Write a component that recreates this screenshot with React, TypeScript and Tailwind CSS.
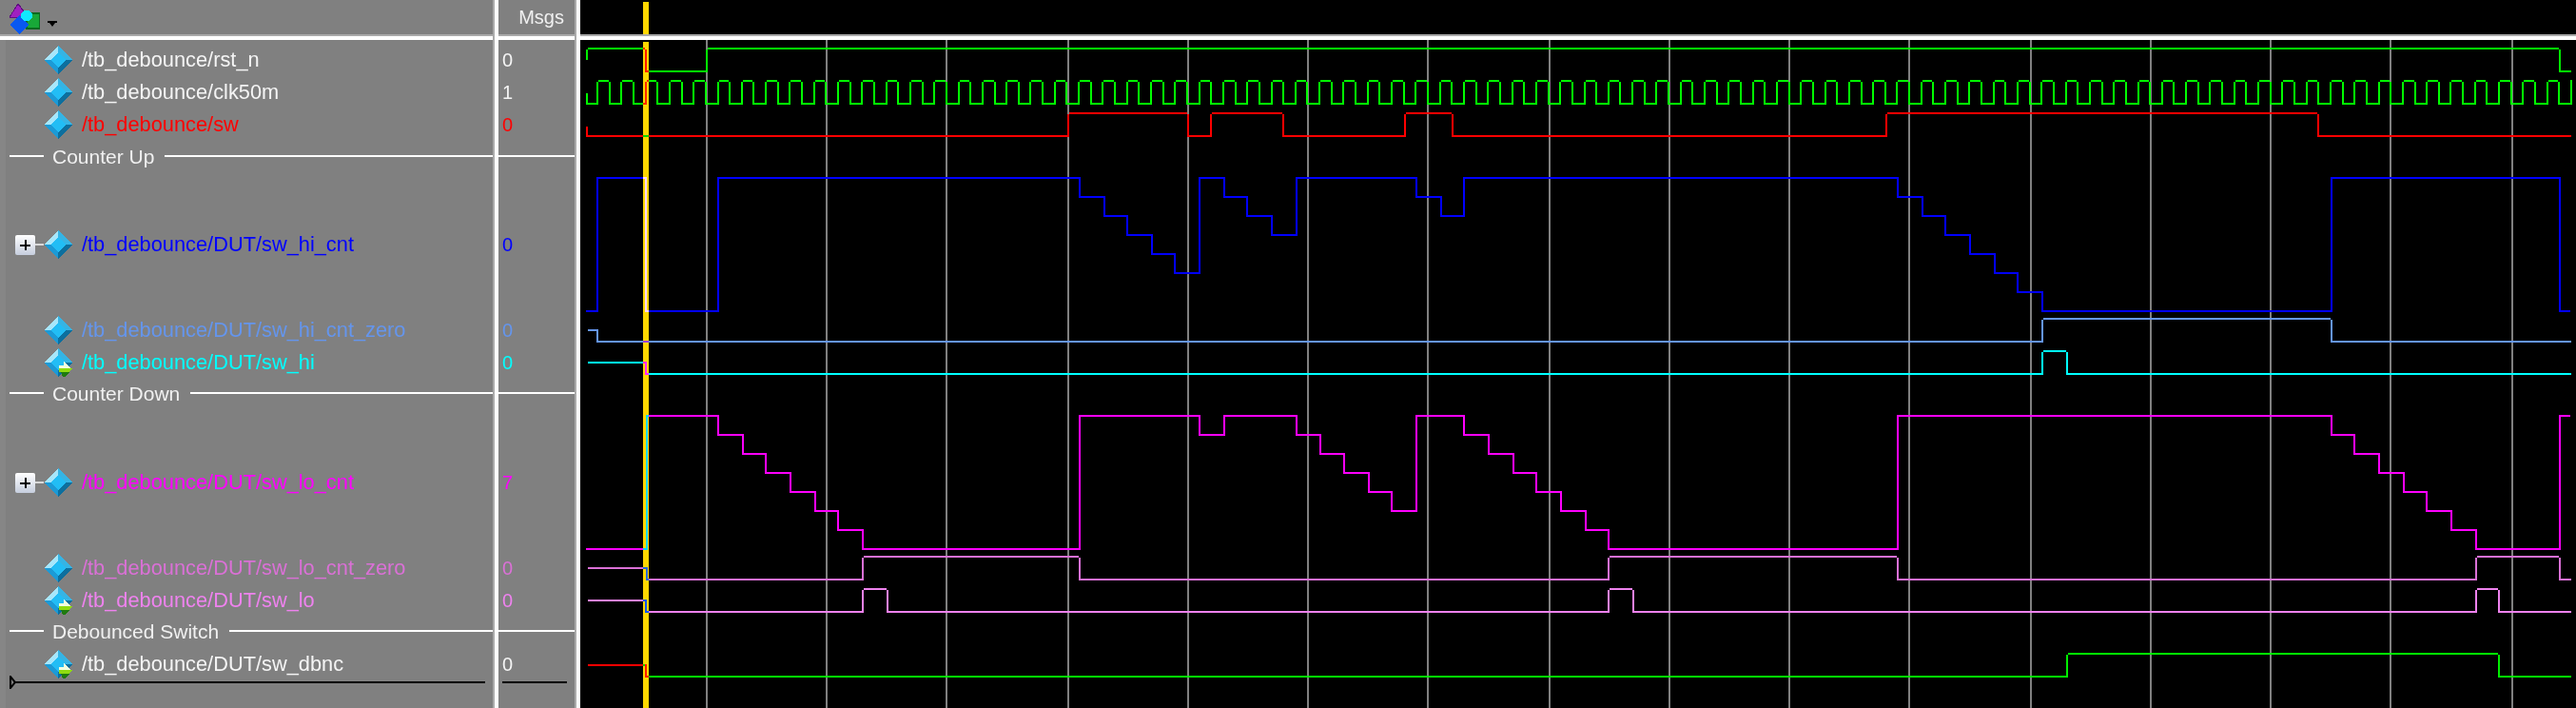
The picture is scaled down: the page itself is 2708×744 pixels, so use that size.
import React from "react";

type Row =
  | { kind: "signal"; name: string; value: string; color: string; h: string; expand?: boolean; output?: boolean }
  | { kind: "divider"; label: string; h: string };

const rows: Row[] = [
  { kind: "signal", name: "/tb_debounce/rst_n", value: "0", color: "text-[#f4f4f4]", h: "h-[34px]" },
  { kind: "signal", name: "/tb_debounce/clk50m", value: "1", color: "text-[#f4f4f4]", h: "h-[34px]" },
  { kind: "signal", name: "/tb_debounce/sw", value: "0", color: "text-[#ff0000]", h: "h-[34px]" },
  { kind: "divider", label: "Counter Up", h: "h-[32px]" },
  { kind: "signal", name: "/tb_debounce/DUT/sw_hi_cnt", value: "0", color: "text-[#0000ff]", h: "h-[150px] pt-[4px]", expand: true },
  { kind: "signal", name: "/tb_debounce/DUT/sw_hi_cnt_zero", value: "0", color: "text-[#6495ed]", h: "h-[34px]" },
  { kind: "signal", name: "/tb_debounce/DUT/sw_hi", value: "0", color: "text-[#00ffff]", h: "h-[33px]", output: true },
  { kind: "divider", label: "Counter Down", h: "h-[32px]" },
  { kind: "signal", name: "/tb_debounce/DUT/sw_lo_cnt", value: "7", color: "text-[#ff00ff]", h: "h-[152px] pt-[4px]", expand: true },
  { kind: "signal", name: "/tb_debounce/DUT/sw_lo_cnt_zero", value: "0", color: "text-[#da70d6]", h: "h-[32px]" },
  { kind: "signal", name: "/tb_debounce/DUT/sw_lo", value: "0", color: "text-[#ee82ee]", h: "h-[36px]", output: true },
  { kind: "divider", label: "Debounced Switch", h: "h-[28px]" },
  { kind: "signal", name: "/tb_debounce/DUT/sw_dbnc", value: "0", color: "text-[#f4f4f4]", h: "h-[39px] pt-[2px]", output: true },
];

const gridLines = [743, 869, 995, 1123, 1249, 1375, 1501, 1629, 1755, 1881, 2007, 2135, 2261, 2387, 2513, 2641];

// one bit signal: the high level loses its corners, same as the simulator draws it
function bitPath(hi: number, lo: number, edges: number[], startHigh: boolean) {
  let d = "";
  let high = startHigh;
  for (let i = 0; i < edges.length - 1; i++) {
    const a = edges[i];
    const b = edges[i + 1];
    d += high ? `M${a + 1} ${hi}H${b - 1}` : `M${a - 1} ${lo}H${b + 1}`;
    if (i < edges.length - 2) d += `M${b} ${hi + 1}V${lo + 1}`;
    high = !high;
  }
  return d;
}

// bus drawn as analog steps: [x, new y] pairs
function stepPath(x0: number, y0: number, steps: number[][], end: number) {
  let d = `M${x0} ${y0}`;
  for (const [x, y] of steps) d += `H${x}V${y}`;
  return d + `H${end}`;
}

function clockEdges() {
  const edges = [617];
  for (let k = 0; k <= 82; k++) {
    edges.push(Math.round(628 + 25.305 * k));
    if (k < 82) edges.push(Math.round(628 + 25.305 * k + 12.65));
  }
  edges.push(2703);
  return edges;
}

const hiCnt = stepPath(
  616,
  327,
  [
    [628, 187], [679, 327], [755, 187], [1135, 207], [1161, 227], [1185, 247], [1211, 267], [1235, 287],
    [1261, 187], [1287, 207], [1311, 227], [1337, 247], [1363, 187], [1489, 207], [1515, 227], [1539, 187],
    [1995, 207], [2021, 227], [2045, 247], [2071, 267], [2097, 287], [2121, 307], [2147, 327], [2451, 187],
    [2691, 327],
  ],
  2702,
);

const loCnt = stepPath(
  616,
  577,
  [
    [680, 437], [755, 457], [781, 477], [805, 497], [831, 517], [857, 537], [881, 557], [907, 577],
    [1135, 437], [1261, 457], [1287, 437], [1363, 457], [1388, 477], [1413, 497], [1439, 517], [1463, 537],
    [1489, 437], [1539, 457], [1565, 477], [1591, 497], [1615, 517], [1641, 537], [1667, 557], [1691, 577],
    [1995, 437], [2451, 457], [2475, 477], [2501, 497], [2527, 517], [2551, 537], [2577, 557], [2603, 577],
    [2691, 437],
  ],
  2702,
);

const traces = [
  { color: "#00ee00", d: "M617 52V63" + bitPath(51, 75, [617, 679, 743, 2691, 2702], true) },
  { color: "#00ff00", d: "M617 98V110" + bitPath(85, 109, clockEdges(), false) },
  { color: "#ff0000", d: "M617 133V144" + bitPath(119, 143, [617, 1123, 1249, 1273, 1349, 1477, 1527, 1983, 2437, 2702], false) },
  { color: "#0000ff", d: hiCnt },
  { color: "#6495ed", d: "M618 347H628V360" + bitPath(335, 359, [628, 2147, 2451, 2702], false) },
  { color: "#00ffff", d: "M618 381H679V394" + bitPath(369, 393, [679, 2147, 2173, 2702], false) },
  { color: "#ff00ff", d: loCnt },
  { color: "#da70d6", d: "M618 597H680V610" + bitPath(585, 609, [680, 907, 1135, 1691, 1995, 2603, 2691, 2702], false) },
  { color: "#ee82ee", d: "M618 631H679V644" + bitPath(619, 643, [679, 907, 933, 1691, 1717, 2603, 2627, 2702], false) },
  { color: "#ff0000", d: "M618 699H678" },
  { color: "#00ee00", d: "M679 698V712" + bitPath(687, 711, [679, 2173, 2627, 2702], false) },
];

function HeaderRule() {
  return <div className="h-[6px] shrink-0 border-t-2 border-[#aaaaaa] bg-white" />;
}

function Sash() {
  return <div className="w-[6px] shrink-0 border-l-2 border-[#aaaaaa] bg-white" />;
}

function SignalIcon({ output }: { output?: boolean }) {
  return (
    <svg width="30" height="30" viewBox="0 0 30 30" shapeRendering="crispEdges" className="shrink-0 overflow-visible">
      <polygon points="15,0 0,15 7,15 15,7" fill="#a6e6fb" />
      <polygon points="15,0 30,15 23,15 15,7" fill="#36b4e4" />
      <polygon points="0,15 15,30 15,23 7,15" fill="#1c9ad6" />
      <polygon points="30,15 15,30 15,23 23,15" fill="#0d6f9e" />
      <polygon points="15,7 23,15 15,23 7,15" fill="#22bdf5" />
      {output && (
        <g>
          <polygon points="18,25 27,25 23,30 20,30" fill="#1f7a10" />
          <polygon points="16,21 30,21 27,25 16,25" fill="#8fdc10" />
          <polygon points="21,14 29,21 16,21 16,18 21,18" fill="#f2ffe0" />
        </g>
      )}
    </svg>
  );
}

function ExpandBox() {
  return (
    <div className="flex w-[40px] shrink-0 items-center pl-[10px]">
      <div className="flex h-[21px] w-[21px] shrink-0 items-center justify-center rounded-[2px] bg-gradient-to-b from-white to-[#c6cede]">
        <svg width="11" height="11" viewBox="0 0 11 11" shapeRendering="crispEdges">
          <path d="M0 5.5H11M5.5 0V11" stroke="#000" strokeWidth="2" />
        </svg>
      </div>
      <div className="h-[2px] w-[9px] bg-[#d8d8d8]" />
    </div>
  );
}

function NamesColumn() {
  return (
    <div className="flex w-[518px] shrink-0 flex-col">
      <div className="flex h-[36px] items-start pl-[10px] pt-[4px]">
        <svg width="32" height="32" viewBox="0 0 32 32" shapeRendering="crispEdges" className="shrink-0">
          <polygon points="0,14 9,0 18,12 18,14" fill="#a020c0" stroke="#601080" />
          <rect x="18" y="10" width="14" height="16" fill="#18a838" stroke="#0c6a20" strokeWidth="2" />
          <polygon points="10,12 20,22 10,32 0,22" fill="#0858f0" />
          <circle cx="18" cy="12.5" r="6" fill="#10e8ff" />
        </svg>
        <svg width="10" height="6" viewBox="0 0 10 6" className="ml-[8px] mt-[18px] shrink-0">
          <polygon points="0,0 10,0 10,2 8,2 5,6 2,2 0,2" fill="#000" />
        </svg>
      </div>
      <HeaderRule />
      <div className="flex flex-1 flex-col border-l-[6px] border-[#868686] pt-[4px]">
        {rows.map((row) =>
          row.kind === "divider" ? (
            <div key={row.label} className={`flex items-center ${row.h}`}>
              <div className="ml-[4px] h-[2px] w-[36px] bg-white" />
              <span className="ml-[9px] mr-[11px] text-[21px] leading-none text-[#f0f0f0]">{row.label}</span>
              <div className="h-[2px] flex-1 bg-white" />
            </div>
          ) : (
            <div key={row.name} className={`flex items-center ${row.h}`}>
              {row.expand ? <ExpandBox /> : <div className="w-[40px] shrink-0" />}
              <SignalIcon output={row.output} />
              <span className={`ml-[10px] whitespace-nowrap text-[21.8px] leading-none ${row.color}`}>{row.name}</span>
            </div>
          ),
        )}
        <div className="relative ml-[10px] mr-[8px] h-[2px] bg-black">
          <svg width="7" height="14" viewBox="0 0 7 14" className="absolute left-[-6px] top-[-6px]">
            <path d="M1 1V13L6 7Z" fill="none" stroke="#000" strokeWidth="2" />
          </svg>
        </div>
      </div>
    </div>
  );
}

function MsgsColumn() {
  return (
    <div className="flex w-[80px] shrink-0 flex-col">
      <div className="flex h-[36px] items-center justify-end pr-[11px] text-[20px] leading-none text-[#f0f0f0]">Msgs</div>
      <HeaderRule />
      <div className="flex flex-1 flex-col pt-[4px]">
        {rows.map((row) =>
          row.kind === "divider" ? (
            <div key={row.label} className={`flex items-center ${row.h}`}>
              <div className="h-[2px] w-full bg-white" />
            </div>
          ) : (
            <div key={row.name} className={`flex items-center pl-[4px] text-[20px] leading-none ${row.h} ${row.color}`}>
              {row.value}
            </div>
          ),
        )}
        <div className="ml-[4px] mr-[8px] h-[2px] bg-black" />
      </div>
    </div>
  );
}

function WavePanel() {
  return (
    <div className="relative flex min-w-0 flex-1 flex-col bg-black">
      <div className="h-[36px] shrink-0" />
      <HeaderRule />
      <svg width="2098" height="702" viewBox="610 42 2098 702" shapeRendering="crispEdges" fill="none" strokeWidth="2">
        {gridLines.map((x) => (
          <path key={x} d={`M${x} 42V744`} stroke="#808080" />
        ))}
        {traces.map((t, i) => (
          <path key={i} d={t.d} stroke={t.color} />
        ))}
      </svg>
      {/* cursor inverts whatever it sits on */}
      <div className="absolute left-[66px] top-[2px] h-[34px] w-[6px] bg-[#ffd700]" />
      <div className="absolute bottom-0 left-[66px] top-[44px] w-[6px] bg-[#ffd700] mix-blend-difference" />
    </div>
  );
}

export default function App() {
  return (
    <div className="flex h-[744px] w-[2708px] overflow-hidden bg-[#808080] font-['Liberation_Sans',sans-serif]">
      <NamesColumn />
      <Sash />
      <MsgsColumn />
      <Sash />
      <WavePanel />
    </div>
  );
}
